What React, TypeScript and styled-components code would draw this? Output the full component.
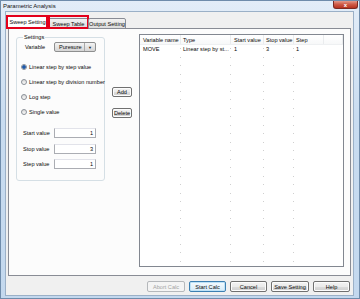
import styled, { createGlobalStyle, css } from "styled-components";

const GlobalStyle = createGlobalStyle`
  html, body {
    margin: 0;
    padding: 0;
    background: #ffffff;
  }
  * {
    box-sizing: border-box;
  }
`;

const Frame = styled.div`
  width: 360px;
  height: 299px;
  display: flex;
  flex-direction: column;
  padding: 0 5px 5px 4px;
  border: 1px solid #6f8cab;
  background: linear-gradient(#e3edf8, #c9dcf0 40%, #c3d8ee);
  font-family: "Liberation Sans", Arial, sans-serif;
  font-size: 5.6px;
  color: #0a0a0a;
`;

const TitleBar = styled.div`
  height: 10px;
  display: flex;
  justify-content: space-between;
  align-items: flex-start;
  margin-right: -4px;
`;

const Title = styled.span`
  font-size: 6px;
  line-height: 11px;
  margin-left: -2px;
  color: #111;
`;

const CloseButton = styled.div`
  width: 25px;
  height: 8px;
  border: 1px solid #7a2a22;
  border-top: none;
  border-radius: 0 0 3px 3px;
  background: linear-gradient(#e39a8c, #cf5c48 45%, #b7321f);
  display: flex;
  align-items: center;
  justify-content: center;
  color: #fff;
  font-size: 6px;
  font-weight: bold;
  line-height: 1;
`;

const Body = styled.div`
  flex: 1;
  display: flex;
  flex-direction: column;
  background: #f0f0f0;
  border: 1px solid #9bb0c7;
  padding: 4px 2px 3px 1px;
`;

const TabStrip = styled.div`
  height: 13px;
  display: flex;
  align-items: flex-end;
  position: relative;
  z-index: 1;
`;

const Tab = styled.div<{ $active?: boolean; $marked?: boolean; $w: number }>`
  position: relative;
  width: ${(p) => p.$w}px;
  height: ${(p) => (p.$active ? 14 : 11)}px;
  margin-right: -1px;
  border: 1px solid #898c95;
  border-bottom: ${(p) => (p.$active ? "none" : "1px solid #898c95")};
  border-radius: 2px 2px 0 0;
  background: ${(p) =>
    p.$active ? "#ffffff" : "linear-gradient(#f3f3f3, #e6e6e6 50%, #dcdcdc)"};
  display: flex;
  align-items: center;
  justify-content: center;
  padding-bottom: ${(p) => (p.$active ? 1 : 0)}px;
  white-space: nowrap;
  ${(p) =>
    p.$marked &&
    css`
      &::after {
        content: "";
        position: absolute;
        top: ${p.$active ? -1 : -4}px;
        left: ${p.$active ? -2 : -1}px;
        right: -1px;
        bottom: ${p.$active ? 0 : -1}px;
        border: 2px solid #e3001b;
      }
    `}
`;

const TabPanel = styled.div`
  flex: 1;
  display: flex;
  margin: -1px 0 0 1px;
  border: 1px solid #898c95;
  background: #fcfcfc;
  padding: 5px 6px 8px 7px;
`;

const GroupBox = styled.fieldset`
  width: 89px;
  min-width: 0;
  height: 147px;
  margin: 0;
  padding: 0 4px 0 4px;
  border: 1px solid #d5dfe5;
  border-radius: 3px;
  display: flex;
  flex-direction: column;
  flex-shrink: 0;
`;

const Legend = styled.legend`
  padding: 0 1px;
  margin-left: 2px;
  line-height: 7px;
`;

const FieldRow = styled.div<{ $top?: number }>`
  display: flex;
  align-items: center;
  height: 10px;
  margin-top: ${(p) => p.$top ?? 0}px;
`;

const FieldLabel = styled.span<{ $w: number; $indent?: number }>`
  width: ${(p) => p.$w}px;
  padding-left: ${(p) => p.$indent ?? 0}px;
  white-space: nowrap;
`;

const Combo = styled.div`
  width: 42px;
  height: 10px;
  display: flex;
  border: 1px solid #8e8f8f;
  border-radius: 2px;
  background: linear-gradient(#f4f4f4, #e4e4e4 50%, #d6d6d6);
`;

const ComboText = styled.span`
  flex: 1;
  padding-left: 4px;
  line-height: 8px;
  border-right: 1px solid #a8a8a8;
`;

const ComboArrow = styled.span`
  width: 10px;
  display: flex;
  align-items: center;
  justify-content: center;
  font-size: 4px;
  color: #222;
`;

const RadioList = styled.div`
  display: flex;
  flex-direction: column;
  gap: 8px;
  margin-top: 11px;
`;

const RadioRow = styled.label`
  display: flex;
  align-items: center;
  height: 7px;
  gap: 2px;
  white-space: nowrap;
`;

const RadioDot = styled.span<{ $checked?: boolean }>`
  width: 6px;
  height: 6px;
  border-radius: 50%;
  border: 1px solid #8a9098;
  background: ${(p) =>
    p.$checked
      ? "radial-gradient(circle, #1f58a8 0 1.5px, #9cc2ea 2px, #f2f2f2 2.5px)"
      : "linear-gradient(#dadada, #fafafa)"};
  flex-shrink: 0;
`;

const InputList = styled.div`
  display: flex;
  flex-direction: column;
  gap: 5.5px;
  margin-top: 13px;
`;

const NumberBox = styled.div`
  width: 42px;
  height: 10px;
  border: 1px solid #abadb3;
  border-top-color: #e2e3ea;
  background: #fff;
  text-align: right;
  padding-right: 2px;
  line-height: 8px;
`;

const SideButtons = styled.div`
  width: 20px;
  margin-left: 7px;
  padding-top: 53px;
  display: flex;
  flex-direction: column;
  gap: 11px;
  flex-shrink: 0;
`;

const Button = styled.button<{ $w?: number; $h?: number; $default?: boolean }>`
  width: ${(p) => p.$w ?? 20}px;
  height: ${(p) => p.$h ?? 10}px;
  padding: 0;
  font-family: "Liberation Sans", Arial, sans-serif;
  font-size: 5.6px;
  color: #0a0a0a;
  border: 1px solid ${(p) => (p.$default ? "#3c7fb1" : "#707070")};
  border-radius: 2px;
  background: ${(p) =>
    p.$default
      ? "linear-gradient(#f4fafe, #e6f3fb 50%, #d5eaf7)"
      : "linear-gradient(#f2f2f2, #ebebeb 50%, #dddddd 51%, #cfcfcf)"};
  box-shadow: inset 0 0 0 1px ${(p) => (p.$default ? "#bfe2f6" : "#fcfcfc")};
  white-space: nowrap;

  &:disabled {
    color: #a3a3a3;
    border-color: #b5b8bb;
    background: #f4f4f4;
    box-shadow: none;
  }
`;

const ListView = styled.div`
  flex: 1;
  margin-left: 7px;
  border: 1px solid #828790;
  background: #fff;
  overflow: hidden;
`;

const COLS = "41px 50px 33px 30px 30px 1fr";

const HeaderRow = styled.div`
  display: grid;
  grid-template-columns: ${COLS};
  height: 10px;
  background: linear-gradient(#ffffff, #f7f8f9);
  border-bottom: 1px solid #eef0f2;
`;

const HeaderCell = styled.div<{ $pad: number }>`
  padding-left: ${(p) => p.$pad}px;
  line-height: 10px;
  white-space: nowrap;
  overflow: hidden;
  border-right: 1px solid #eaecee;
`;

const Row = styled.div`
  display: grid;
  grid-template-columns: ${COLS};
  height: 8.5px;
`;

const Cell = styled.div<{ $pad: number; $dot?: boolean }>`
  padding-left: ${(p) => p.$pad}px;
  line-height: 8.5px;
  white-space: nowrap;
  overflow: hidden;
  background: ${(p) =>
    p.$dot ? "linear-gradient(#cfcfcf, #cfcfcf) right 3px / 1px 1px no-repeat" : "none"};
`;

const Footer = styled.div`
  display: flex;
  justify-content: flex-end;
  gap: 4px;
  margin-top: 5px;
  padding-right: 1px;
`;

const columns = [
  { title: "Variable name", pad: 3 },
  { title: "Type", pad: 2 },
  { title: "Start value", pad: 3 },
  { title: "Stop value", pad: 2 },
  { title: "Step", pad: 2 },
  { title: "", pad: 0 },
];

const rows: string[][] = [["MOVE", "Linear step by st...", "1", "3", "1", ""]];
while (rows.length < 26) rows.push(["", "", "", "", "", ""]);

const radios = [
  "Linear step by step value",
  "Linear step by division number",
  "Log step",
  "Single value",
];

const values = [
  { label: "Start value", value: "1" },
  { label: "Stop value", value: "3" },
  { label: "Step value", value: "1" },
];

export default function App() {
  return (
    <>
      <GlobalStyle />
      <Frame>
        <TitleBar>
          <Title>Parametric Analysis</Title>
          <CloseButton>x</CloseButton>
        </TitleBar>
        <Body>
          <TabStrip>
            <Tab $active $marked $w={41}>
              Sweep Setting
            </Tab>
            <Tab $marked $w={41} style={{ marginLeft: 1 }}>
              Sweep Table
            </Tab>
            <Tab $w={38}>Output Setting</Tab>
          </TabStrip>
          <TabPanel>
            <GroupBox>
              <Legend>Settings</Legend>
              <FieldRow $top={1}>
                <FieldLabel $w={33} $indent={4}>
                  Variable
                </FieldLabel>
                <Combo>
                  <ComboText>Puresure</ComboText>
                  <ComboArrow>▼</ComboArrow>
                </Combo>
              </FieldRow>
              <RadioList>
                {radios.map((r, i) => (
                  <RadioRow key={r}>
                    <RadioDot $checked={i === 0} />
                    {r}
                  </RadioRow>
                ))}
              </RadioList>
              <InputList>
                {values.map((v) => (
                  <FieldRow key={v.label}>
                    <FieldLabel $w={33} $indent={2}>
                      {v.label}
                    </FieldLabel>
                    <NumberBox>{v.value}</NumberBox>
                  </FieldRow>
                ))}
              </InputList>
            </GroupBox>
            <SideButtons>
              <Button>Add</Button>
              <Button>Delete</Button>
            </SideButtons>
            <ListView>
              <HeaderRow>
                {columns.map((c, i) => (
                  <HeaderCell key={i} $pad={c.pad}>
                    {c.title}
                  </HeaderCell>
                ))}
              </HeaderRow>
              {rows.map((r, ri) => (
                <Row key={ri}>
                  {r.map((text, ci) => (
                    <Cell key={ci} $pad={columns[ci].pad} $dot={ci < 4}>
                      {text}
                    </Cell>
                  ))}
                </Row>
              ))}
            </ListView>
          </TabPanel>
          <Footer>
            <Button $w={38} $h={11} disabled>
              Abort Calc
            </Button>
            <Button $w={37} $h={11} $default>
              Start Calc
            </Button>
            <Button $w={37} $h={11}>
              Cancel
            </Button>
            <Button $w={38} $h={11}>
              Save Setting
            </Button>
            <Button $w={37} $h={11}>
              Help
            </Button>
          </Footer>
        </Body>
      </Frame>
    </>
  );
}
